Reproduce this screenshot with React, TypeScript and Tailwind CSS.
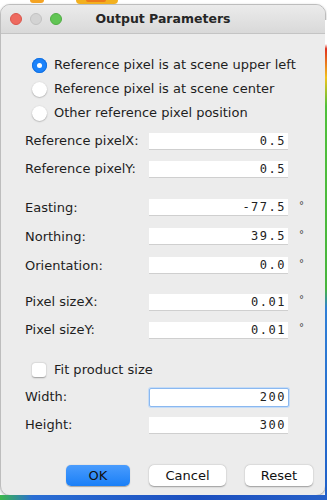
import React from "react";

const font = { fontFamily: '"DejaVu Sans", "Liberation Sans", Arial, sans-serif' };
const mono = { fontFamily: '"DejaVu Sans Mono", "Liberation Mono", monospace' };

function Field({ value, focused = false }: { value: string; focused?: boolean }) {
  return (
    <div
      className={
        focused
          ? "shrink-0 w-[140px] h-[19px] bg-white border border-[#8ab8f0] rounded-[2px] shadow-[0_0_0_1px_#c5dcf7] flex items-center justify-end pr-[2px] text-[12px] tracking-[1.5px] text-[#222]"
          : "shrink-0 w-[139px] h-[17px] bg-white border-b border-[#cfcfcf] flex items-center justify-end pr-[2px] text-[12px] tracking-[1.5px] text-[#222]"
      }
      style={mono}
    >
      {value}
    </div>
  );
}

function Row({ label, value, deg = false, h, focused = false }: { label: string; value: string; deg?: boolean; h: string; focused?: boolean }) {
  return (
    <div className={`flex items-center ${h}`}>
      <div className="shrink-0 w-[148px] pl-[24px] whitespace-nowrap text-[13px] text-[#1e1e1e]">{label}</div>
      <Field value={value} focused={focused} />
      {deg && <div className="ml-[11px] text-[10px] text-[#444] -mt-[5px]">°</div>}
    </div>
  );
}

function Radio({ checked, label }: { checked?: boolean; label: string }) {
  return (
    <div className="flex items-center h-6 pl-[31px]">
      {checked ? (
        <div className="shrink-0 w-[15px] h-[15px] rounded-full bg-[#1b83fb] flex items-center justify-center shadow-[inset_0_0_0_1px_#1571e0]">
          <div className="w-[5px] h-[5px] rounded-full bg-white" />
        </div>
      ) : (
        <div className="shrink-0 w-[15px] h-[15px] rounded-full bg-white shadow-[0_0.5px_1.5px_rgba(0,0,0,0.35)]" />
      )}
      <span className="ml-[7px] whitespace-nowrap text-[13px] text-[#1e1e1e]">{label}</span>
    </div>
  );
}

export default function App() {
  return (
    <div className="relative w-[327px] h-[500px] bg-white overflow-hidden" style={font}>
      {/* desktop background bits */}
      <div className="absolute left-[30px] -top-[3px] w-[14px] h-[6px] rounded-full bg-[#f4a323]" />
      <div className="absolute left-[76px] -top-[4px] w-[42px] h-[8px] rounded-full bg-[#f2b01f]" />
      <div className="absolute left-[86px] -top-[2px] w-[20px] h-[4px] rounded-full bg-[#ec7a1b]" />
      <div className="absolute right-0 top-[20px] w-[2px] h-[480px] bg-[linear-gradient(to_bottom,#fff_0%,#fff_5%,#e0301e_6%,#f2c21d_12%,#4fc03a_18%,#47b53c_56%,#2f7fd6_60%,#1f5fc8_100%)]" />
      <div className="absolute left-0 bottom-0 w-[327px] h-[5px] bg-[linear-gradient(to_right,#3cb84a,#2a6ed4_10%,#1c4fbf_60%,#2660c8)]" />

      <div className="pt-[4px]">
        <div className="w-[326px] rounded-[10px] bg-[#ececec] border border-[#bdbdbd] overflow-hidden shadow-[0_1px_3px_rgba(0,0,0,0.25)]">
          {/* title bar */}
          <div className="relative h-[29px] bg-[linear-gradient(to_bottom,#ebebeb,#d9d9d9)] border-b border-[#c4c4c4] flex items-center justify-center">
            <div className="absolute left-[9px] top-[8px] flex gap-[8px]">
              <div className="w-[12px] h-[12px] rounded-full bg-[#ee6a5f] border border-[#d9564c]" />
              <div className="w-[12px] h-[12px] rounded-full bg-[#d3d3d3] border border-[#c2c2c2]" />
              <div className="w-[12px] h-[12px] rounded-full bg-[#61c554] border border-[#50ad44]" />
            </div>
            <div className="text-[12.5px] font-bold text-[#262626] mt-[1px]">Output Parameters</div>
          </div>

          {/* content */}
          <div className="pt-[19px]">
            <Radio checked label="Reference pixel is at scene upper left" />
            <Radio label="Reference pixel is at scene center" />
            <Radio label="Other reference pixel position" />

            <div className="mt-[2px]">
              <Row h="h-[28px]" label="Reference pixelX:" value="0.5" />
              <Row h="h-[28px]" label="Reference pixelY:" value="0.5" />
            </div>

            <div className="mt-[10px]">
              <Row h="h-[29px]" label="Easting:" value="-77.5" deg />
              <Row h="h-[29px]" label="Northing:" value="39.5" deg />
              <Row h="h-[29px]" label="Orientation:" value="0.0" deg />
            </div>

            <div className="mt-[8px]">
              <Row h="h-[28px]" label="Pixel sizeX:" value="0.01" deg />
              <Row h="h-[28px]" label="Pixel sizeY:" value="0.01" deg />
            </div>

            <div className="mt-[14px] flex items-center h-6 pl-[31px]">
              <div className="w-[14px] h-[14px] rounded-[3px] bg-white shadow-[0_0.5px_1.5px_rgba(0,0,0,0.35)]" />
              <span className="ml-[8px] text-[13px] text-[#1e1e1e]">Fit product size</span>
            </div>

            <div className="mt-[1px]">
              <Row h="h-[28px]" label="Width:" value="200" focused />
              <Row h="h-[28px]" label="Height:" value="300" />
            </div>

            <div className="mt-[26px] pb-[9px] flex items-center">
              <div className="ml-[65px] w-[64px] h-[21px] rounded-[5px] bg-[linear-gradient(to_bottom,#4a9cfd,#1a7ff7)] shadow-[0_0.5px_1px_rgba(0,0,0,0.3)] flex items-center justify-center text-[13px] text-[#111]">OK</div>
              <div className="ml-[19px] w-[77px] h-[21px] rounded-[5px] bg-white shadow-[0_0.5px_1.5px_rgba(0,0,0,0.35)] flex items-center justify-center text-[13px] text-[#111]">Cancel</div>
              <div className="ml-[19px] w-[68px] h-[21px] rounded-[5px] bg-white shadow-[0_0.5px_1.5px_rgba(0,0,0,0.35)] flex items-center justify-center text-[13px] text-[#111]">Reset</div>
            </div>
          </div>
        </div>
      </div>
    </div>
  );
}
